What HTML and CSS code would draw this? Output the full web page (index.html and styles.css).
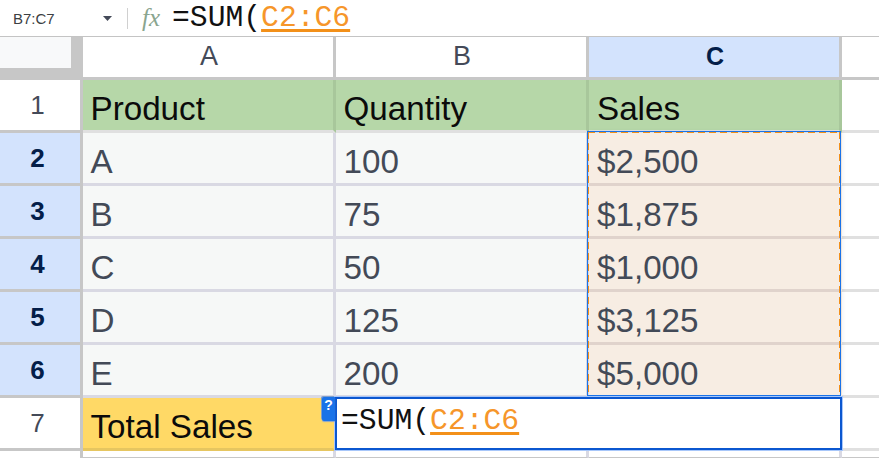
FILE: index.html
```html
<!DOCTYPE html>
<html lang="en">
<head>
<meta charset="utf-8">
<title>Sheet</title>
<link rel="stylesheet" href="styles.css">
</head>
<body>
<div class="formula-bar">
  <div class="name-box">B7:C7</div>
  <svg class="caret" width="9" height="5" viewBox="0 0 9 5"><path d="M0 0h9L4.5 5z" fill="#444a58"/></svg>
  <div class="divider"></div>
  <div class="fx">fx</div>
  <div class="formula mono">=SUM(<span class="ref">C2:C6</span></div>
</div>
<div class="sheet">
  <div class="corner"><div class="corner-inner"></div></div>
  <div class="col-head">A</div>
  <div class="col-head">B</div>
  <div class="col-head active">C</div>
  <div class="col-head blank"></div>

  <div class="row-head">1</div>
  <div class="cell green">Product</div>
  <div class="cell green">Quantity</div>
  <div class="cell green col-c">Sales</div>
  <div class="cell blank"></div>

  <div class="row-head active">2</div>
  <div class="cell">A</div>
  <div class="cell">100</div>
  <div class="cell sel">$2,500</div>
  <div class="cell blank"></div>

  <div class="row-head active">3</div>
  <div class="cell">B</div>
  <div class="cell">75</div>
  <div class="cell sel">$1,875</div>
  <div class="cell blank"></div>

  <div class="row-head active">4</div>
  <div class="cell">C</div>
  <div class="cell">50</div>
  <div class="cell sel">$1,000</div>
  <div class="cell blank"></div>

  <div class="row-head active">5</div>
  <div class="cell">D</div>
  <div class="cell">125</div>
  <div class="cell sel">$3,125</div>
  <div class="cell blank"></div>

  <div class="row-head active">6</div>
  <div class="cell">E</div>
  <div class="cell">200</div>
  <div class="cell sel">$5,000</div>
  <div class="cell blank"></div>

  <div class="row-head">7</div>
  <div class="cell yellow">Total Sales</div>
  <div class="cell blank"></div>
  <div class="cell blank"></div>
  <div class="cell blank"></div>

  <div class="row-head tail"></div>
  <div class="cell tail"></div>
  <div class="cell tail"></div>
  <div class="cell tail"></div>
  <div class="cell tail"></div>

  <div class="range"></div>
  <div class="editor mono">=SUM(<span class="ref">C2:C6</span><div class="help">?</div></div>
</div>
</body>
</html>
```

FILE: styles.css
```css
* { box-sizing: border-box; }
html, body { margin: 0; padding: 0; }
body {
  width: 879px;
  height: 458px;
  overflow: hidden;
  background: #fff;
  font-family: "Liberation Sans", Arial, sans-serif;
}
.formula-bar {
  height: 37px;
  display: flex;
  align-items: center;
  border-bottom: 1px solid #c4c4c4;
  padding-left: 13px;
}
.name-box { width: 90px; font-size: 15px; color: #3c4043; }
.caret { margin-top: 1px; }
.divider { width: 1px; height: 21px; background: #d0d0d0; margin-left: 15px; }
.fx {
  margin-left: 14px;
  width: 30px;
  font: italic 400 25px "Liberation Serif", serif;
  color: #8aa58f;
}
.mono { font-family: "Liberation Mono", "DejaVu Sans Mono", monospace; font-size: 29.7px; color: #111; }
.formula { line-height: 38px; }
.ref {
  color: #f6962a;
  text-decoration: underline;
  text-decoration-color: #f39019;
  text-decoration-thickness: 3px;
  text-underline-offset: 3px;
}
.sheet {
  position: relative;
  display: grid;
  grid-template-columns: 83px 253px 253px 253px 37px;
  grid-template-rows: 43px repeat(7, 53px) 7px;
}
.corner {
  background: #c7c7c7;
  border-right: 3px solid #c7c7c7;
}
.corner-inner { width: 71px; height: 31px; background: #f8f9fa; }
.col-head {
  border-right: 3px solid #c7c7c7;
  border-bottom: 3px solid #c7c7c7;
  background: #fff;
  color: #444a58;
  font-size: 27px;
  line-height: 38px;
  text-align: center;
  padding-left: 2px;
}
.col-head.active { background: #d3e3fd; color: #041e49; font-weight: 700; font-size: 25px; }
.col-head.blank { border-right: 0; }
.row-head {
  border-right: 3px solid #c7c7c7;
  border-bottom: 3px solid #c7c7c7;
  background: #fff;
  color: #444a58;
  font-size: 26px;
  line-height: 50px;
  text-align: center;
  padding-right: 5px;
}
.row-head.active { background: #d3e3fd; color: #041e49; font-weight: 700; font-size: 26px; }
.row-head.tail { border-bottom: 0; }
.cell {
  border-right: 3px solid #d9d9e3;
  border-bottom: 3px solid #d9d9e3;
  background: #f6f8f7;
  color: #434a57;
  font-size: 33.2px;
  line-height: 43px;
  padding: 7px 0 0 7.5px;
  white-space: nowrap;
}
.cell.green {
  background: #b6d7a8;
  color: #0b0b0b;
  border-right-color: #a8c79b;
  border-bottom-color: #e0e0e0;
}
.cell.col-c { padding-left: 8px; }
.cell.yellow {
  background: #ffd966;
  color: #0b0b0b;
  border-right-color: #ffd966;
  border-bottom-color: #e6c660;
}
.cell.sel {
  background: #f7ede3;
  border-bottom-color: #e0d3cc;
  border-right-color: #f7ede3;
  padding-left: 8px;
}
.cell.blank { background: #fff; border-right-color: #e0e0e0; border-bottom-color: #e0e0e0; }
.cell.tail { background: #fff; border-right-color: #d9d9e3; border-bottom: 1px solid #c7c7c7; padding: 0; }
.sheet > .cell:nth-child(5n) { border-right: 0; }
.range {
  position: absolute;
  left: 587px;
  top: 94px;
  width: 254px;
  height: 265px;
  border: 1px solid #1a73e8;
  box-shadow: 2px 0 4px rgba(0, 0, 0, 0.05);
  background:
    repeating-linear-gradient(90deg, #f39019 0 7px, transparent 7px 11px) top left / 100% 1px no-repeat,
    repeating-linear-gradient(180deg, #f39019 0 7px, transparent 7px 11px) top left / 1px 100% no-repeat,
    repeating-linear-gradient(180deg, #f39019 0 7px, transparent 7px 11px) top right / 1px 100% no-repeat;
}
.editor {
  position: absolute;
  left: 335px;
  top: 360px;
  width: 507px;
  height: 53px;
  border: 2px solid #0b57d0;
  box-shadow: 0 0 0 1px #a8c7fa;
  background: #fff;
  padding-left: 4px;
  line-height: 45px;
}
.help {
  position: absolute;
  left: -15px;
  top: -2px;
  width: 13px;
  height: 24px;
  background: #1a73e8;
  border-radius: 2px 0 0 2px;
  box-shadow: -1px -1px 0 #7d9ecb, 0 1px 1px #8ba6cc;
  color: #fff;
  font: 700 14px/17px "Liberation Sans", sans-serif;
  text-align: center;
}
```
